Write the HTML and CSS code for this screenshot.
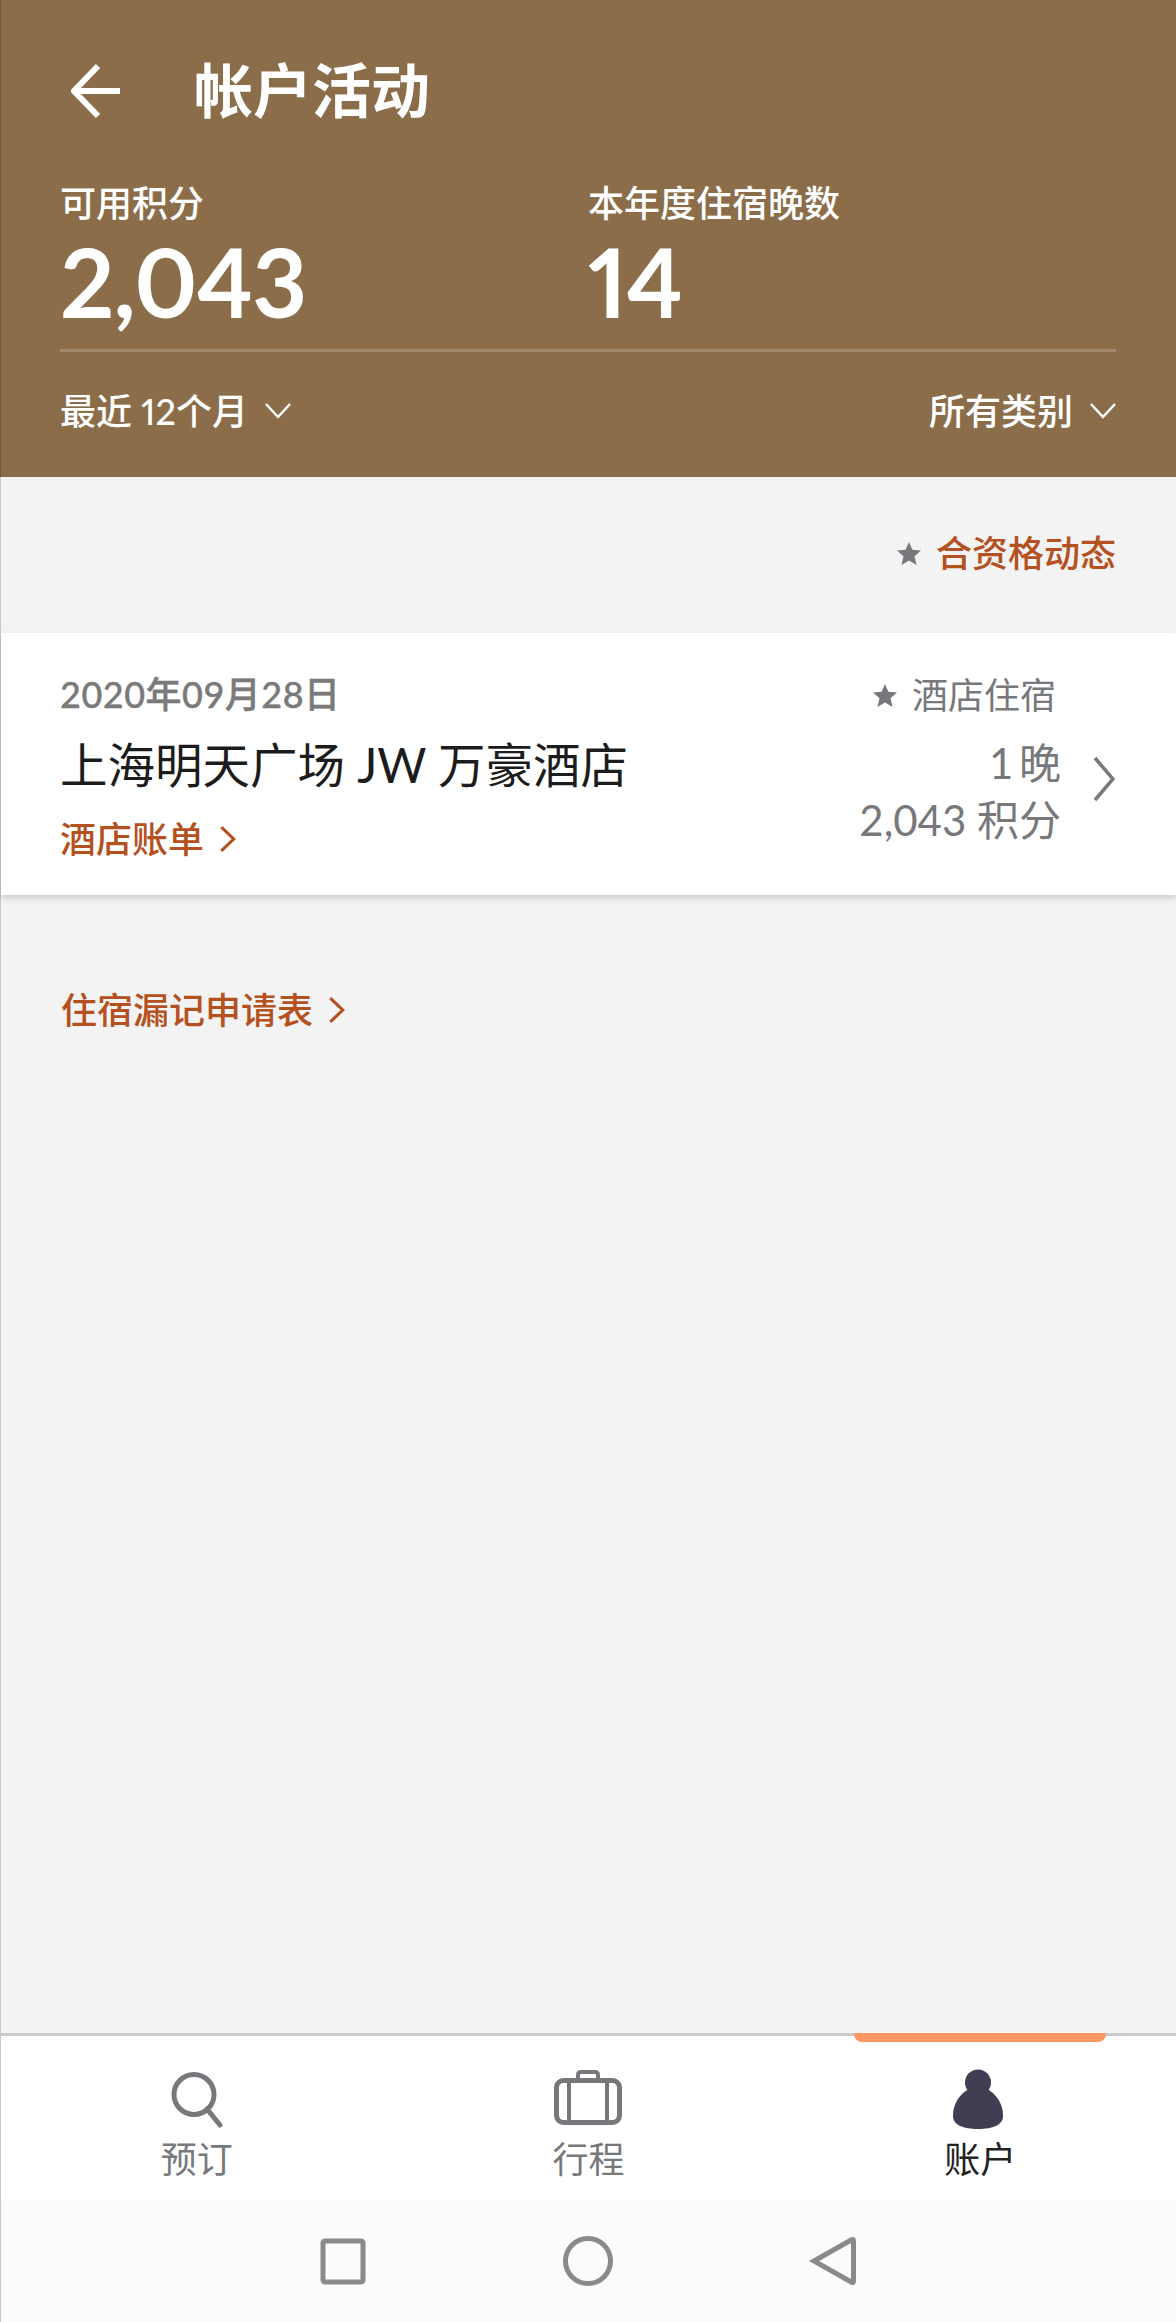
FILE: index.html
```html
<!DOCTYPE html>
<html lang="zh-CN">
<head>
<meta charset="utf-8">
<title>帐户活动</title>
<link rel="stylesheet" href="styles.css">
</head>
<body>
<div class="phone">
  <header class="header">
    <div class="topbar">
      <svg class="back" viewBox="0 0 50 56"><path d="M49 28H4M27 3L3 28l24 25" /></svg>
      <h1 class="title">帐户活动</h1>
    </div>
    <div class="stats">
      <div class="stat"><div class="stat-label">可用积分</div><div class="stat-value">2,043</div></div>
      <div class="stat"><div class="stat-label">本年度住宿晚数</div><div class="stat-value">14</div></div>
    </div>
    <div class="filters">
      <div class="filter"><span>最近 12个月</span><svg class="caret" viewBox="0 0 26 16"><path d="M1 1l12 13L25 1"/></svg></div>
      <div class="filter"><span>所有类别</span><svg class="caret" viewBox="0 0 26 16"><path d="M1 1l12 13L25 1"/></svg></div>
    </div>
  </header>
  <main class="content">
    <div class="eligible">
      <svg class="star" viewBox="0 0 24 23"><path d="M12 0l3.400 7.800 8.600.8-6.500 5.700 2 8.700-7.500-4.500-7.500 4.500 2-8.700L0 8.600l8.600-.8z"/></svg>
      <span class="eligible-text">合资格动态</span>
    </div>
    <section class="card">
      <div class="card-left">
        <div class="date">2020年09月28日</div>
        <div class="hotel">上海明天广场 JW 万豪酒店</div>
        <div class="link"><span>酒店账单</span><svg class="link-arrow" viewBox="0 0 16 27"><path d="M2 2l12 11.500L2 25"/></svg></div>
      </div>
      <div class="card-right">
        <div class="kind">
          <svg class="star" viewBox="0 0 24 23"><path d="M12 0l3.400 7.800 8.600.8-6.500 5.700 2 8.700-7.500-4.500-7.500 4.500 2-8.700L0 8.600l8.600-.8z"/></svg>
          <span>酒店住宿</span>
        </div>
        <div class="earn">
          <div class="earn-text"><div class="nights">1 晚</div><div>2,043 积分</div></div>
          <svg class="card-arrow" viewBox="0 0 22 46"><path d="M2 2l18 21L2 44"/></svg>
        </div>
      </div>
    </section>
    <div class="link missing"><span>住宿漏记申请表</span><svg class="link-arrow" viewBox="0 0 16 27"><path d="M2 2l12 11.500L2 25"/></svg></div>
  </main>
  <nav class="tabs">
    <div class="tab">
      <svg class="tab-icon" viewBox="0 0 70 62"><circle cx="32" cy="25.500" r="20" class="line"/><path d="M45 40l13 16" class="line cap"/></svg>
      <span class="tab-label">预订</span>
    </div>
    <div class="tab">
      <svg class="tab-icon" viewBox="0 0 70 62"><rect x="3.500" y="11.500" width="63" height="42" rx="7" class="line"/><path d="M16 12v41M54 12v41M25 11V6q0-3 3-3h14q3 0 3 3v5" class="line thin"/></svg>
      <span class="tab-label">行程</span>
    </div>
    <div class="tab active">
      <div class="indicator"></div>
      <svg class="tab-icon" viewBox="0 0 70 62"><circle cx="33" cy="13.500" r="13"/><path d="M33 18c12 0 25 12 25 29 0 9-10 13-25 13S8 56 8 47c0-17 13-29 25-29z"/></svg>
      <span class="tab-label">账户</span>
    </div>
  </nav>
  <div class="system">
    <svg class="sys-icon" viewBox="0 0 50 50"><rect x="5" y="5" width="40" height="41" rx="2"/></svg>
    <svg class="sys-icon" viewBox="0 0 50 50"><circle cx="25" cy="25" r="22.500"/></svg>
    <svg class="sys-icon" viewBox="0 0 50 50"><path d="M6 25L44 3.500q1.500-.5 1.500 1.500v40q0 2-1.500 1.500z"/></svg>
  </div>
</div>
</body>
</html>
```

FILE: styles.css
```css
* { box-sizing: border-box; margin: 0; padding: 0; }

html, body {
  width: 1176px;
  height: 2322px;
  overflow: hidden;
}

body {
  font-family: "Lato", "Noto Sans CJK SC", sans-serif;
  background: #f3f3f3;
}

.phone {
  width: 1176px;
  height: 2322px;
  display: flex;
  flex-direction: column;
}

.header {
  height: 477px;
  flex: none;
  background: #8b6d4a;
  color: #fff;
  border-left: 1px solid #6e5a40;
  padding: 0 60px 0 59px;
}

.topbar {
  height: 181px;
  display: flex;
  align-items: center;
  padding: 0 0 0 11px;
  gap: 73px;
}

.back {
  width: 50px;
  height: 56px;
  fill: none;
  stroke: #fff;
  stroke-width: 6;
}

.title {
  font-size: 59px;
  line-height: 70px;
  font-weight: 700;
}

.stats {
  display: grid;
  grid-template-columns: 528px 1fr;
  height: 171px;
  border-bottom: 3px solid #a38a6d;
}

.stat-label {
  font-size: 36px;
  line-height: 44px;
  font-weight: 500;
}

.stat-value {
  font-size: 95px;
  line-height: 112px;
  font-weight: 700;
  font-variant-numeric: proportional-nums;
  letter-spacing: -1px;
}

.filters {
  display: flex;
  justify-content: space-between;
  align-items: center;
  height: 124px;
  padding-bottom: 6px;
}

.filter {
  display: flex;
  align-items: center;
  gap: 17px;
  font-size: 36px;
  line-height: 44px;
  font-weight: 500;
  font-variant-numeric: proportional-nums;
}

.caret {
  width: 26px;
  height: 16px;
  fill: none;
  stroke: #fff;
  stroke-width: 2.500;
}

.content {
  flex: 1;
  border-left: 1px solid #c8c8c8;
}

.eligible {
  height: 156px;
  padding: 0 60px 4px 0;
  display: flex;
  justify-content: flex-end;
  align-items: center;
  gap: 15px;
}

.star {
  width: 24px;
  height: 23px;
  fill: #77787b;
}

.eligible-text {
  font-size: 36px;
  line-height: 44px;
  font-weight: 500;
  color: #b5501f;
}

.card {
  height: 262px;
  background: #fff;
  box-shadow: 0 3px 6px rgba(0, 0, 0, 0.16);
  padding: 39px 61px 0 59px;
  display: flex;
  justify-content: space-between;
}

.date {
  font-size: 36px;
  line-height: 44px;
  font-weight: 500;
  letter-spacing: 0.5px;
  color: #7a7a7a;
  -webkit-text-stroke: 0.4px #7a7a7a;
}

.hotel {
  font-size: 47.500px;
  line-height: 60px;
  color: #1c1c1c;
  margin-top: 19px;
}

.link {
  display: flex;
  align-items: center;
  gap: 15px;
  font-size: 36px;
  line-height: 44px;
  font-weight: 500;
  color: #b5501f;
  margin-top: 22px;
}

.link-arrow {
  width: 17px;
  height: 28px;
  fill: none;
  stroke: #b5501f;
  stroke-width: 3;
}

.card-right {
  display: flex;
  flex-direction: column;
  align-items: flex-end;
  padding-top: 1px;
}

.kind {
  display: flex;
  align-items: center;
  gap: 15px;
  font-size: 36px;
  line-height: 44px;
  color: #77787b;
  padding-right: 4px;
  margin-right: 55px;
}

.earn {
  display: flex;
  align-items: flex-start;
  gap: 32px;
  margin-top: 18px;
}

.earn-text {
  font-size: 42px;
  line-height: 57px;
  text-align: right;
  color: #77787b;
}

.nights {
  word-spacing: -5px;
}

.card-arrow {
  width: 22px;
  height: 46px;
  margin-top: 21px;
  fill: none;
  stroke: #77787b;
  stroke-width: 3.500;
}

.missing {
  margin: 93px 0 0 60px;
}

.tabs {
  height: 167px;
  flex: none;
  display: grid;
  grid-template-columns: repeat(3, 1fr);
  background: #fff;
  border-top: 3px solid #cbcbcb;
  border-left: 1px solid #c8c8c8;
}

.tab {
  position: relative;
  display: flex;
  flex-direction: column;
  align-items: center;
  padding-top: 33px;
  font-size: 36px;
  line-height: 44px;
  color: #77787b;
}

.tab-icon {
  width: 70px;
  height: 62px;
  fill: #413d53;
}

.tab-label {
  margin-top: 6px;
}

.tab.active {
  color: #222;
}

.indicator {
  position: absolute;
  top: -3px;
  left: 70px;
  width: 252px;
  height: 9px;
  background: #ff9763;
  border-radius: 0 0 8px 8px;
}

.line {
  fill: none;
  stroke: #77787b;
  stroke-width: 5;
}

.line.cap {
  stroke-linecap: round;
}

.line.thin {
  stroke-width: 4;
}

.system {
  height: 122px;
  flex: none;
  background: #fbfbfb;
  border-left: 1px solid #c8c8c8;
  display: flex;
  justify-content: center;
  align-items: center;
  gap: 195px;
  padding-right: 2px;
}

.sys-icon {
  width: 50px;
  height: 50px;
  fill: none;
  stroke: #8a8a8a;
  stroke-width: 5;
}
```
